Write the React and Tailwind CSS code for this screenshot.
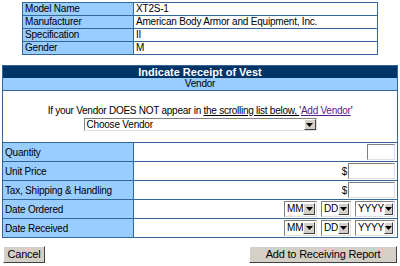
import { Fragment } from 'react';

const F = { fontFamily: '"Liberation Sans", Arial, sans-serif' };

function Arrow() {
  return (
    <div className="w-[12px] self-stretch bg-[#d4d0c8] border border-t-white border-l-white border-r-[#404040] border-b-[#404040] flex items-center justify-center">
      <svg width="7" height="4" viewBox="0 0 7 4"><path d="M0 0h7L3.5 4z" fill="#000" /></svg>
    </div>
  );
}

function Sel({ label, w }) {
  return (
    <div className={`${w} h-[16px] flex items-stretch bg-white border border-t-[#808080] border-l-[#808080] border-r-[#e0e0e0] border-b-[#e0e0e0] p-px`}>
      <div className="flex-1 flex items-center pl-[1px] text-[10px] text-[#000] leading-none">{label}</div>
      <Arrow />
    </div>
  );
}

function Input({ w }) {
  return <div className={`${w} h-[16px] bg-white border border-t-[#808080] border-l-[#808080] border-r-[#e0e0e0] border-b-[#e0e0e0]`} />;
}

function Btn({ children, w }) {
  return (
    <div className={`${w} h-[17px] bg-[#d4d0c8] border border-t-white border-l-white border-r-[#404040] border-b-[#404040] flex items-center justify-center text-[11px] text-black leading-none`}>
      {children}
    </div>
  );
}

export default function App() {
  const top = [
    ['Model Name', 'XT2S-1'],
    ['Manufacturer', 'American Body Armor and Equipment, Inc.'],
    ['Specification', 'II'],
    ['Gender', 'M'],
  ];
  return (
    <div className="w-[400px] h-[266px] bg-white overflow-hidden tracking-[-0.2px]" style={F}>
      <div className="pt-[2px] pl-[22px]">
        <div className="w-[356px] grid grid-cols-[110px_1fr] gap-px bg-[#336699] p-px">
          {top.map(([a, b]) => (
            <Fragment key={a}>
              <div className="h-[12px] bg-[#99ccff] text-[10px] leading-[12px] pl-[2px] text-black">{a}</div>
              <div className="h-[12px] bg-white text-[10px] leading-[12px] pl-[2px] text-black">{b}</div>
            </Fragment>
          ))}
        </div>
      </div>

      <div className="mt-[10px] ml-[2px] w-[396px] border border-[#336699] flex flex-col">
        <div className="h-[12px] bg-[#003366] text-white font-bold text-[11px] leading-[12px] text-center tracking-normal">Indicate Receipt of Vest</div>
        <div className="h-[12px] bg-[#99ccff] text-[10px] leading-[12px] text-center text-black">Vendor</div>
        <div className="h-[52px] bg-white border-t border-[#336699] flex flex-col items-center pt-[14px]">
          <div className="text-[10px] leading-[12px] text-black tracking-[-0.25px]">
            If your Vendor DOES NOT appear in <span className="underline">the scrolling list below, </span>'<span className="underline text-[#551a8b]">Add Vendor</span>'
          </div>
          <div className="mt-px w-[233px] h-[13px] flex items-stretch bg-white border border-t-[#808080] border-l-[#808080] border-r-[#e0e0e0] border-b-[#e0e0e0]">
            <div className="flex-1 flex items-center pl-[2px] text-[10px] leading-none text-black">Choose Vendor</div>
            <Arrow />
          </div>
        </div>
        <div className="grid grid-cols-[130px_1fr] gap-px bg-[#336699] pt-px">
          <div className="h-[18px] bg-[#99ccff] text-[10px] flex items-center pl-[2px]">Quantity</div>
          <div className="h-[18px] bg-white flex items-center justify-end pr-[2px]"><Input w="w-[28px]" /></div>
          <div className="h-[18px] bg-[#99ccff] text-[10px] flex items-center pl-[2px]">Unit Price</div>
          <div className="h-[18px] bg-white flex items-center justify-end pr-[2px] gap-px text-[10px]">$<Input w="w-[47px]" /></div>
          <div className="h-[18px] bg-[#99ccff] text-[10px] flex items-center pl-[2px]">Tax, Shipping &amp; Handling</div>
          <div className="h-[18px] bg-white flex items-center justify-end pr-[2px] gap-px text-[10px]">$<Input w="w-[47px]" /></div>
          <div className="h-[18px] bg-[#99ccff] text-[10px] flex items-center pl-[2px]">Date Ordered</div>
          <div className="h-[18px] bg-white flex items-center justify-end pr-[2px] gap-[4px]">
            <Sel label="MM" w="w-[33px]" /><Sel label="DD" w="w-[30px]" /><Sel label="YYYY" w="w-[40px]" />
          </div>
          <div className="h-[18px] bg-[#99ccff] text-[10px] flex items-center pl-[2px]">Date Received</div>
          <div className="h-[18px] bg-white flex items-center justify-end pr-[2px] gap-[4px]">
            <Sel label="MM" w="w-[33px]" /><Sel label="DD" w="w-[30px]" /><Sel label="YYYY" w="w-[40px]" />
          </div>
        </div>
      </div>

      <div className="mt-[8px] flex justify-between pl-[3px] pr-[3px]">
        <Btn w="w-[42px]">Cancel</Btn>
        <Btn w="w-[148px]">Add to Receiving Report</Btn>
      </div>
    </div>
  );
}
